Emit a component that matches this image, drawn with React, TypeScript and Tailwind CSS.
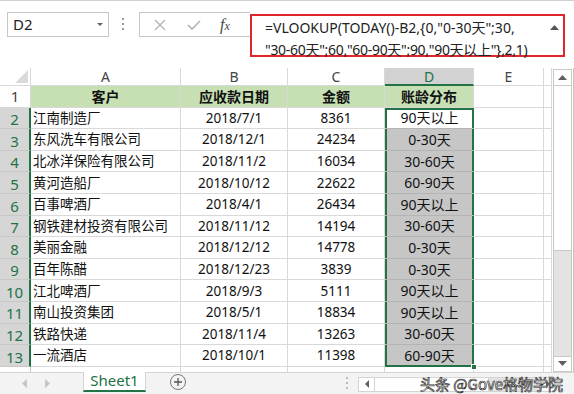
import React from "react";

const rows: [string, string, string, string][] = [
  ["江南制造厂", "2018/7/1", "8361", "90天以上"],
  ["东风洗车有限公司", "2018/12/1", "24234", "0-30天"],
  ["北冰洋保险有限公司", "2018/11/2", "16034", "30-60天"],
  ["黄河造船厂", "2018/10/12", "22622", "60-90天"],
  ["百事啤酒厂", "2018/4/1", "26434", "90天以上"],
  ["钢铁建材投资有限公司", "2018/11/12", "14194", "30-60天"],
  ["美丽金融", "2018/12/12", "14778", "0-30天"],
  ["百年陈醋", "2018/12/23", "3839", "0-30天"],
  ["江北啤酒厂", "2018/9/3", "5111", "90天以上"],
  ["南山投资集团", "2018/5/1", "18834", "90天以上"],
  ["铁路快递", "2018/11/4", "13263", "30-60天"],
  ["一流酒店", "2018/10/1", "11398", "60-90天"],
];

const font = "font-['Noto_Sans','Noto_Sans_CJK_SC',sans-serif]";
const cell = "border-r border-b border-[#d9d9d9] flex items-center whitespace-nowrap overflow-hidden";

function Caret({ down = false, color = "#606060" }: { down?: boolean; color?: string }) {
  return (
    <svg width="9" height="5" viewBox="0 0 9 5">
      <path d={down ? "M0 0 H9 L4.5 5 Z" : "M0 5 H9 L4.5 0 Z"} fill={color} />
    </svg>
  );
}

function FormulaBar() {
  return (
    <div className="flex h-[68px] items-start border-t border-[#d0d0d0] bg-white pt-[11px]">
      <div className="ml-[7px] flex h-[25px] w-[102px] items-center justify-between border border-[#c6c6c6] pl-[5px] pr-[5px]">
        <span className="text-[15px] leading-none text-[#222]">D2</span>
        <svg width="6" height="3" viewBox="0 0 6 3">
          <path d="M0 0 H6 L3 3 Z" fill="#666" />
        </svg>
      </div>
      <div className="ml-[13px] mt-[6px] flex w-[3px] flex-col gap-[3px]">
        <span className="h-[2px] w-[2px] bg-[#999]" />
        <span className="h-[2px] w-[2px] bg-[#999]" />
        <span className="h-[2px] w-[2px] bg-[#999]" />
      </div>
      <div className="ml-[14px] flex h-[25px] w-[111px] items-center border border-r-0 border-[#c6c6c6]">
        <svg width="14" height="14" viewBox="0 0 14 14" className="ml-[13px]">
          <path d="M2 2 L12 12 M12 2 L2 12" stroke="#b4b4b4" strokeWidth="1.4" />
        </svg>
        <svg width="16" height="14" viewBox="0 0 16 14" className="ml-[19px]">
          <path d="M2 7 L6 11 L14 3" stroke="#b4b4b4" strokeWidth="1.6" fill="none" />
        </svg>
        <span className="ml-[18px] font-['Liberation_Serif',serif] text-[16px] italic leading-none text-[#444]">
          f<span className="text-[12px]">x</span>
        </span>
      </div>
      <div className="mt-[2px] flex h-[43px] w-[315px] items-start justify-between whitespace-nowrap border-2 border-[#e0262b] pl-[13px] pr-[4px] pt-[1px] text-[14px] leading-[22px] text-[#222]">
        <div>
          <div>=VLOOKUP(TODAY()-B2,{"{"}0,"0-30天";30,</div>
          <div className="tracking-[-0.3px]">"30-60天";60,"60-90天";90,"90天以上"{"}"},2,1)</div>
        </div>
        <div className="mt-[8px] flex">
          <Caret color="#555" />
        </div>
      </div>
    </div>
  );
}

function Sheet() {
  return (
    <div className="grid w-[552px] shrink-0 grid-cols-[31px_150px_107px_97px_89px_70px_8px] grid-rows-[18px_repeat(13,21.6px)_5px] overflow-hidden">
      <div className={`${cell} relative bg-white`}>
        <svg width="13" height="13" viewBox="0 0 13 13" className="absolute bottom-[2px] right-[2px]">
          <path d="M13 0 V13 H0 Z" fill="#dadada" />
        </svg>
      </div>
      {["A", "B", "C"].map((c) => (
        <div key={c} className={`${cell} justify-center bg-white text-[14px] text-[#444]`}>
          {c}
        </div>
      ))}
      <div className="flex items-center justify-center border-r border-b-2 border-[#d9d9d9] border-b-[#217346] bg-[#d2d2d2] text-[14px] text-[#217346]">
        D
      </div>
      <div className={`${cell} justify-center bg-white text-[14px] text-[#444]`}>E</div>
      <div className={`${cell} bg-white`} />

      <div className={`${cell} justify-center bg-white text-[15px] text-[#444]`}>1</div>
      {["客户", "应收款日期", "金额", "账龄分布"].map((h) => (
        <div key={h} className={`${cell} justify-center bg-[#c6e0b4] text-[14px] font-bold text-[#111]`}>
          {h}
        </div>
      ))}
      <div className={`${cell} bg-white`} />
      <div className={`${cell} bg-white`} />

      {rows.map((r, i) => {
        const first = i === 0;
        const last = i === rows.length - 1;
        return (
          <React.Fragment key={i}>
            <div className="flex items-center justify-center border-b border-r-2 border-[#c8c8c8] border-r-[#217346] bg-[#d6d6d6] pt-[3px] text-[15px] text-[#217346]">
              {i + 2}
            </div>
            <div className={`${cell} pl-[2px] text-[13.5px] text-[#111]`}>{r[0]}</div>
            <div className={`${cell} justify-center text-[13.5px] text-[#111]`}>{r[1]}</div>
            <div className={`${cell} justify-center text-[13.5px] text-[#111]`}>{r[2]}</div>
            <div
              className={`relative flex items-center justify-center whitespace-nowrap border-b border-[#b4b4b4] text-[14px] text-[#111] ${
                first
                  ? "bg-white shadow-[inset_2px_2px_0_#217346,inset_-2px_0_0_#217346]"
                  : last
                    ? "bg-[#c6c6c6] shadow-[inset_2px_-2px_0_#217346,inset_-2px_0_0_#217346]"
                    : "bg-[#c6c6c6] shadow-[inset_2px_0_0_#217346,inset_-2px_0_0_#217346]"
              } ${last ? "border-b-0" : ""}`}
            >
              {r[3]}
              {last && (
                <span className="absolute -bottom-[3px] -right-[3px] h-[6px] w-[6px] border border-white bg-[#217346]" />
              )}
            </div>
            <div className={`${cell} bg-white`} />
            <div className={`${cell} bg-white`} />
          </React.Fragment>
        );
      })}

      <div className="border-r border-[#c8c8c8] bg-white" />
      <div className="border-r border-[#d9d9d9]" />
      <div className="border-r border-[#d9d9d9]" />
      <div className="border-r border-[#d9d9d9]" />
      <div className="border-r border-[#d9d9d9]" />
      <div className="border-r border-[#d9d9d9]" />
      <div className="border-r border-[#d9d9d9]" />
    </div>
  );
}

function VScroll() {
  return (
    <div className="ml-[1px] mt-[1px] flex w-[19px] shrink-0 flex-col border border-[#c8c8c8] bg-[#e3e3e3]">
      <div className="flex h-[16px] shrink-0 items-center justify-center border-b border-[#c8c8c8] bg-white">
        <Caret />
      </div>
      <div className="h-[165px] shrink-0 border-b border-[#c8c8c8] bg-white" />
      <div className="flex-1" />
      <div className="flex h-[15px] shrink-0 items-center justify-center border-t border-[#c8c8c8] bg-white">
        <Caret down />
      </div>
    </div>
  );
}

function TabBar() {
  return (
    <div className="relative flex h-[22px] items-start border-t border-[#d4d4d4] bg-[#f3f3f3]">
      <svg width="5" height="9" viewBox="0 0 5 9" className="ml-[22px] mt-[6px]">
        <path d="M5 0 V9 L0 4.5 Z" fill="#c4c4c4" />
      </svg>
      <svg width="5" height="9" viewBox="0 0 5 9" className="ml-[18px] mt-[6px]">
        <path d="M0 0 V9 L5 4.5 Z" fill="#c4c4c4" />
      </svg>
      <div className="-mt-[1px] ml-[33px] flex h-[20px] w-[63px] items-center justify-center border-x border-[#d4d4d4] border-b-2 border-b-[#217346] bg-white text-[15px] text-[#217346]">
        Sheet1
      </div>
      <div className="ml-[24px] mt-[1px] flex h-[16px] w-[16px] items-center justify-center rounded-full border border-[#777]">
        <svg width="10" height="10" viewBox="0 0 10 10">
          <path d="M5 1 V9 M1 5 H9" stroke="#555" strokeWidth="1.3" />
        </svg>
      </div>
      <div className="ml-[160px] mt-[4px] flex flex-col gap-[3px]">
        <span className="h-[2px] w-[2px] bg-[#bbb]" />
        <span className="h-[2px] w-[2px] bg-[#bbb]" />
        <span className="h-[2px] w-[2px] bg-[#bbb]" />
      </div>
      <div className="ml-[10px] mt-[4px] flex h-[15px] w-[197px] items-center border border-[#d4d4d4] bg-white">
        <svg width="4" height="8" viewBox="0 0 4 8" className="ml-[6px]">
          <path d="M4 0 V8 L0 4 Z" fill="#606060" />
        </svg>
        <span className="ml-[5px] h-full w-[115px] border-x border-[#d4d4d4] bg-white" />
        <span className="h-full flex-1 bg-[#e3e3e3]" />
        <svg width="4" height="8" viewBox="0 0 4 8" className="mx-[4px]">
          <path d="M0 0 V8 L4 4 Z" fill="#606060" />
        </svg>
      </div>
      <span className="absolute left-[420px] top-[1px] font-['Noto_Sans_CJK_SC',sans-serif] text-[15px] leading-[20px] text-white [-webkit-text-stroke:0.7px_#333]">
        头条 @Gove格物学院
      </span>
    </div>
  );
}

export default function App() {
  return (
    <div className={`${font} h-[394px] w-[574px] overflow-hidden bg-white`}>
      <FormulaBar />
      <div className="flex items-stretch">
        <Sheet />
        <VScroll />
        <div className="ml-[1px] w-[1px] shrink-0 bg-[#bfc8c2]" />
      </div>
      <TabBar />
    </div>
  );
}
